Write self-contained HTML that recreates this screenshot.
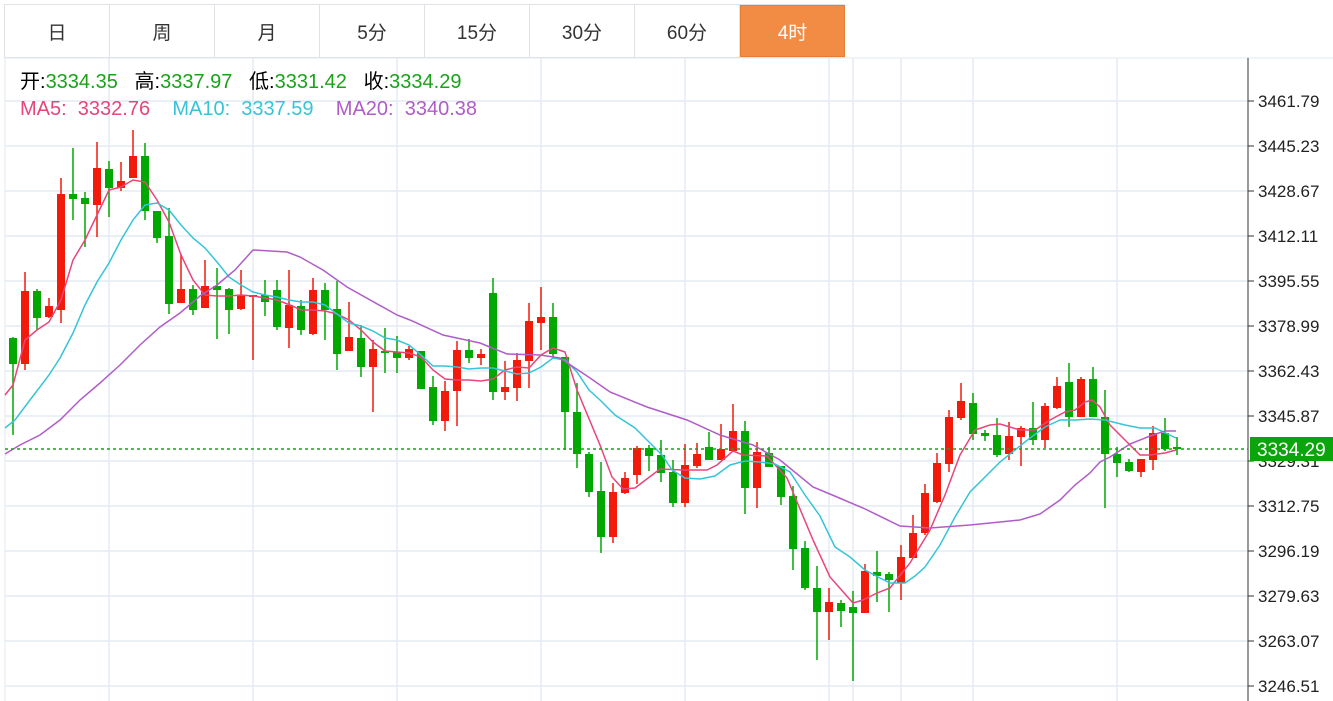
<!DOCTYPE html>
<html><head><meta charset="utf-8"><style>
*{margin:0;padding:0;box-sizing:border-box}
body{width:1333px;height:701px;background:#fff;overflow:hidden;font-family:"Liberation Sans","Noto Sans CJK SC",sans-serif;position:relative}
.tabs{position:absolute;left:4px;top:4px;height:54px;display:flex;border:1px solid #dfe3e8;border-right:none}
.tab{width:105px;height:52px;border-right:1px solid #dfe3e8;display:flex;align-items:center;justify-content:center;font-size:19px;color:#333}
.tab.a{background:#f28c45;color:#fff;border:1px solid #e87e35}
.hd{position:absolute;left:20px;font-size:20px;white-space:nowrap;line-height:24px}
.g{color:#1aa31a}
svg{position:absolute;left:0;top:0}
</style></head><body>
<svg id="s" width="1333" height="701"></svg>
<div class="tabs"><div class="tab">日</div><div class="tab">周</div><div class="tab">月</div><div class="tab">5分</div><div class="tab">15分</div><div class="tab">30分</div><div class="tab">60分</div><div class="tab a">4时</div></div>
<div class="hd" style="top:70px">开:<span class="g">3334.35</span>&nbsp;&nbsp; 高:<span class="g">3337.97</span>&nbsp;&nbsp; 低:<span class="g">3331.42</span>&nbsp;&nbsp; 收:<span class="g">3334.29</span></div>
<div class="hd" style="top:97px"><span style="color:#e8457a">MA5:&nbsp; 3332.76</span>&nbsp;&nbsp;&nbsp; <span style="color:#35c4d8">MA10:&nbsp; 3337.59</span>&nbsp;&nbsp;&nbsp; <span style="color:#b05cc8">MA20:&nbsp; 3340.38</span></div>
<script>
var s='';
var G='#00a800',R='#f21a0a';
s+='<line x1="4" y1="58" x2="1333" y2="58" stroke="#e3e8ee"/>';
s+='<line x1="5" y1="58" x2="5" y2="701" stroke="#e3e8ee"/>';
[101,146,191,236,281,326,371,416,461,506,551,596,641,686].forEach(function(y){s+='<line x1="5" y1="'+y+'" x2="1248" y2="'+y+'" stroke="#e3ebf2" stroke-width="1.5"/>';});
[109,253,397,541,685,829,853,901,973,1117].forEach(function(x){s+='<line x1="'+x+'" y1="58" x2="'+x+'" y2="701" stroke="#e3ebf2" stroke-width="1.5"/>';});
s+='<line x1="1248" y1="58" x2="1248" y2="701" stroke="#333"/>';
var labs=['3461.79','3445.23','3428.67','3412.11','3395.55','3378.99','3362.43','3345.87','3329.31','3312.75','3296.19','3279.63','3263.07','3246.51'];
labs.forEach(function(t,i){var y=101+i*45;s+='<line x1="1248" y1="'+y+'" x2="1254" y2="'+y+'" stroke="#333"/><text x="1258" y="'+(y+6)+'" font-size="17" fill="#222" font-family="Liberation Sans,sans-serif">'+t+'</text>';});
var c=[
['g',338,364,337,435],['r',291,364,272,370],['g',291,318,289,330],['r',306,317,298,318],['r',194,310,178,323],
['g',194,199,148,220],['g',198,204,192,247],['r',168,205,142,237],['g',169,188,161,217],['r',181,188,162,191],
['r',156,178,130,178],['g',156,211,143,220],['g',211,238,211,243],['g',236,304,208,314],['r',289,303,254,303],
['g',289,310,285,315],['r',286,308,260,308],['g',286,290,268,339],['g',289,310,288,334],['r',295,309,270,310],
['r',295,297,295,360],['g',295,302,280,316],['g',290,327,280,330],['r',305,328,270,348],['g',306,330,300,335],
['r',290,334,278,335],['g',290,310,283,340],['g',309,354,281,370],['r',337,351,302,351],['g',338,367,325,377],
['r',349,367,340,412],['g',351,353,328,373],['g',352,358,336,373],['r',349,358,346,360],['g',351,389,351,389],
['g',387,421,376,425],['r',391,421,381,431],['r',350,391,341,426],['g',350,358,339,363],['r',354,358,349,365],
['g',293,392,278,400],['r',387,392,361,400],['r',360,388,353,401],['r',321,361,303,388],['r',317,323,287,350],
['g',317,354,303,357],['g',357,412,357,450],['g',412,454,383,468],['g',454,492,452,497],['g',491,537,462,553],
['r',492,537,483,543],['r',478,493,472,494],['r',448,475,446,484],['g',448,456,445,471],['g',455,473,440,482],
['g',472,503,460,507],['r',465,503,444,507],['r',454,466,443,468],['g',447,460,432,460],['r',449,460,424,460],
['r',431,451,404,451],['g',431,488,421,514],['r',452,488,442,508],['g',453,467,447,467],['g',466,497,466,505],
['g',496,549,486,570],['g',548,588,541,590],['g',588,612,566,660],['r',602,612,588,640],['g',603,611,600,627],
['g',607,613,591,681],['r',571,613,564,613],['g',572,576,551,602],['g',574,580,572,612],['r',557,583,545,600],
['r',533,558,515,558],['r',493,533,484,535],['r',463,502,453,503],['r',417,464,410,472],['r',401,418,383,420],
['g',403,434,393,440],['g',433,436,430,441],['g',435,455,418,457],['r',436,454,422,460],['r',428,437,426,466],
['g',428,440,402,445],['r',406,440,403,448],['r',386,408,377,409],['g',382,417,363,427],['r',379,417,377,417],
['g',379,417,367,417],['g',417,454,390,508],['g',454,463,447,477],['g',462,471,459,472],['r',459,472,459,477],
['r',433,460,426,470],['g',433,449,418,451],['g',447,449,437,455]];
c.forEach(function(d,i){var x=13+i*12,col=d[0]=='g'?G:R;
s+='<line x1="'+x+'" y1="'+d[3]+'" x2="'+x+'" y2="'+d[4]+'" stroke="'+col+'" stroke-width="1.5"/>';
s+='<rect x="'+(x-4)+'" y="'+d[1]+'" width="8" height="'+Math.max(2,d[2]-d[1])+'" fill="'+col+'"/>';});
function pl(p,col){s+='<polyline fill="none" stroke="'+col+'" stroke-width="1.5" points="'+p+'"/>';}
pl('5,395 13,385 25,340 37,330 49,322 61,300 73,260 85,240 97,215 109,190 121,187 133,180 145,182 157,200 169,222 181,255 193,280 205,295 217,296 229,296 241,295 253,296 265,298 277,300 290,305 301,310 313,310 325,311 337,314 349,320 361,330 373,342 385,351 397,352 409,353 421,357 433,370 445,379 457,380 469,380 481,381 493,379 505,370 517,367 529,368 541,355 553,348 565,352 577,390 600,445 612,477 623,489 635,488 660,469 683,470 707,470 717,465 733,451 743,455 767,456 787,478 813,540 830,577 853,603 863,600 877,593 890,588 910,563 930,530 945,495 960,455 975,430 990,425 1000,424 1010,427 1020,430 1035,430 1050,420 1065,412 1075,410 1085,402 1092,400 1100,407 1110,425 1125,440 1140,455 1150,455 1165,453 1176,450','#e8457a');
pl('5,428 15,420 30,400 49,375 60,358 73,333 85,305 97,282 109,263 121,240 133,220 145,205 157,203 169,210 181,225 193,238 205,248 217,262 229,277 241,285 253,292 265,295 277,297 289,300 301,302 313,302 325,305 337,314 349,323 361,326 373,331 385,338 397,340 409,345 421,355 433,366 445,366 457,367 469,369 481,368 493,368 505,371 517,374 529,373 541,367 553,358 565,360 577,372 589,390 600,400 615,415 635,428 650,443 662,455 672,470 685,478 700,479 715,476 730,465 745,461 760,462 775,464 790,472 805,495 820,516 835,547 850,557 865,570 880,578 890,583 905,583 915,576 925,567 940,545 955,517 970,492 985,477 1000,462 1015,450 1030,438 1045,427 1060,420 1075,420 1090,419 1105,420 1125,425 1140,428 1155,428 1176,438','#35c4d8');
pl('5,454 20,445 40,435 60,420 80,400 100,383 120,365 140,345 160,327 180,313 200,296 217,285 235,270 253,250 287,252 300,257 323,270 347,287 397,315 410,320 443,335 480,343 507,354 540,355 560,358 590,378 610,392 647,407 687,420 720,435 753,445 780,460 813,487 837,497 863,508 900,526 930,528 970,525 1000,522 1020,520 1040,514 1060,500 1075,485 1090,473 1100,462 1110,457 1130,444 1150,436 1165,431 1176,431','#b05cc8');
s+='<line x1="5" y1="449" x2="1248" y2="449" stroke="#1aa31a" stroke-width="1.5" stroke-dasharray="3,3"/>';
s+='<rect x="1250" y="437" width="83" height="24" fill="#0aa50a"/><text x="1257" y="456" font-size="19" fill="#fff" font-family="Liberation Sans,sans-serif">3334.29</text>';
document.getElementById('s').innerHTML=s;
</script>
</body></html>
